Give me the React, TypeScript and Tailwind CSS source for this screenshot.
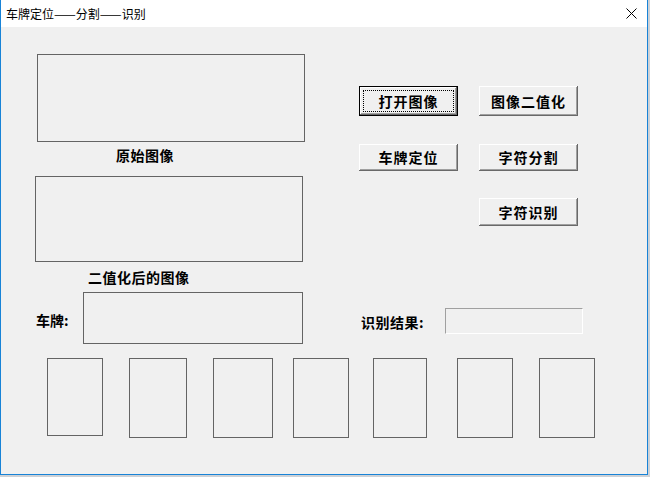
import React from 'react'

const cjk = { fontFamily: '"Noto Sans CJK SC", "Noto Sans", sans-serif' }

function Box({ className }: { className: string }) {
  return <div className={`border border-[#646464] ${className}`} />
}

function Btn({ label, isDefault, className = '' }: { label: string; isDefault?: boolean; className?: string }) {
  if (isDefault) {
    return (
      <div
        className={`flex border border-black bg-[#f0f0f0] p-[3px] shadow-[inset_-1px_-1px_0_#696969,inset_1px_1px_0_#ffffff,inset_-2px_-2px_0_#a0a0a0] ${className}`}
      >
        <div className="flex flex-1 items-center justify-center border border-dotted border-black text-[14px] font-bold tracking-[1px] text-black">
          {label}
        </div>
      </div>
    )
  }
  return (
    <div
      className={`flex items-center justify-center bg-[#f0f0f0] text-[14px] font-bold tracking-[1px] text-black shadow-[inset_-1px_-1px_0_#696969,inset_1px_1px_0_#ffffff,inset_-2px_-2px_0_#a0a0a0] ${className}`}
    >
      {label}
    </div>
  )
}

export default function App() {
  return (
    <div className="h-[477px] w-[650px] bg-[#cdd1d6]" style={cjk}>
      <div className="flex h-[475px] w-[648px] flex-col border-x border-b border-[#1883d7] bg-[#f0f0f0]">
        {/* title bar */}
        <div className="flex h-[27px] shrink-0 items-center bg-white pl-[5px] pr-[10px]">
          <span className="flex items-center text-[12px] leading-[16px] text-black">
            车牌定位<span className="text-[13px] leading-[16px]">——</span>分割<span className="text-[13px] leading-[16px]">——</span>识别
          </span>
          <svg className="ml-auto" width="11" height="11" viewBox="0 0 11 11">
            <path d="M0.5 0.5 L10.5 10.5 M10.5 0.5 L0.5 10.5" stroke="#000" strokeWidth="1" />
          </svg>
        </div>

        {/* client */}
        <div className="flex">
          <div className="ml-[34px] flex w-[270px] flex-col">
            <Box className="ml-[2px] mt-[27px] h-[88px] w-[268px]" />
            <div className="ml-[81px] mt-[5px] h-[16px] text-[14px] font-bold leading-[16px] tracking-[0.5px] text-black">
              原始图像
            </div>
            <Box className="mt-[13px] h-[86px] w-[268px]" />
            <div className="ml-[53px] mt-[7px] h-[16px] text-[14px] font-bold leading-[16px] tracking-[0.5px] text-black">
              二值化后的图像
            </div>
            <div className="mt-[7px] flex items-center">
              <span className="ml-[1px] mt-[4px] w-[47px] text-[14px] font-bold leading-[16px] text-black">车牌:</span>
              <Box className="h-[52px] w-[220px]" />
            </div>
          </div>

          <div className="ml-[54px] flex flex-col">
            <div className="mt-[59px] flex gap-[21px]">
              <Btn label="打开图像" isDefault className="h-[30px] w-[99px]" />
              <Btn label="图像二值化" className="h-[30px] w-[99px]" />
            </div>
            <div className="mt-[28px] flex gap-[21px]">
              <Btn label="车牌定位" className="h-[27px] w-[99px]" />
              <Btn label="字符分割" className="h-[27px] w-[99px]" />
            </div>
            <div className="mt-[27px] flex">
              <Btn label="字符识别" className="ml-[120px] h-[28px] w-[99px]" />
            </div>
            <div className="mt-[82px] flex w-[224px] items-center">
              <span className="ml-[2px] mt-[2px] text-[14px] font-bold leading-[16px] tracking-[0.5px] text-black">识别结果:</span>
              <div className="ml-auto h-[26px] w-[138px] border-l border-t border-b border-r border-l-[#a0a0a0] border-t-[#a0a0a0] border-b-white border-r-white bg-[#f0f0f0]" />
            </div>
          </div>
        </div>

        <div className="mt-[14px] flex items-start">
          <Box className="ml-[46px] h-[78px] w-[56px]" />
          <Box className="ml-[26px] h-[80px] w-[58px]" />
          <Box className="ml-[26px] h-[80px] w-[60px]" />
          <Box className="ml-[20px] h-[80px] w-[56px]" />
          <Box className="ml-[24px] h-[80px] w-[54px]" />
          <Box className="ml-[30px] h-[80px] w-[56px]" />
          <Box className="ml-[26px] h-[80px] w-[56px]" />
        </div>
      </div>
    </div>
  )
}
